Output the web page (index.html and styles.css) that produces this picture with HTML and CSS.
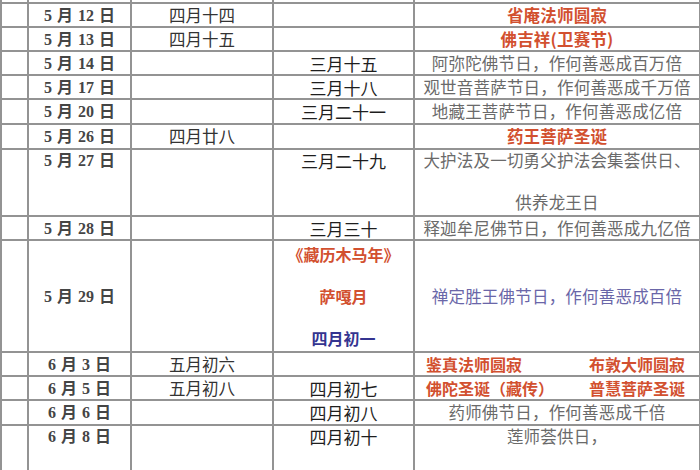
FILE: index.html
```html
<!DOCTYPE html>
<html lang="zh-CN">
<head>
<meta charset="utf-8">
<link rel="stylesheet" href="styles.css">
</head>
<body>
<div class="page">
<table class="cal">
  <colgroup>
    <col class="c0"><col class="c1"><col class="c2"><col class="c3"><col class="c4">
  </colgroup>
  <tr class="stub"><td></td><td></td><td></td><td></td><td></td></tr>
  <tr class="r24"><td></td><td class="date">5 月 12 日</td><td class="lunar">四月十四</td><td class="tib"></td><td class="note red">省庵法师圆寂</td></tr>
  <tr class="r24"><td></td><td class="date">5 月 13 日</td><td class="lunar">四月十五</td><td class="tib"></td><td class="note red">佛吉祥(卫赛节)</td></tr>
  <tr class="r24"><td></td><td class="date">5 月 14 日</td><td class="lunar"></td><td class="tib">三月十五</td><td class="note">阿弥陀佛节日，作何善恶成百万倍</td></tr>
  <tr class="r24"><td></td><td class="date">5 月 17 日</td><td class="lunar"></td><td class="tib">三月十八</td><td class="note">观世音菩萨节日，作何善恶成千万倍</td></tr>
  <tr class="r25"><td></td><td class="date">5 月 20 日</td><td class="lunar"></td><td class="tib">三月二十一</td><td class="note">地藏王菩萨节日，作何善恶成亿倍</td></tr>
  <tr class="r25"><td></td><td class="date">5 月 26 日</td><td class="lunar">四月廿八</td><td class="tib"></td><td class="note red">药王菩萨圣诞</td></tr>
  <tr class="r67 top"><td></td><td class="date">5 月 27 日</td><td class="lunar"></td><td class="tib">三月二十九</td><td class="note">大护法及一切勇父护法会集荟供日、<br><br>供养龙王日</td></tr>
  <tr class="r24"><td></td><td class="date">5 月 28 日</td><td class="lunar"></td><td class="tib">三月三十</td><td class="note">释迦牟尼佛节日，作何善恶成九亿倍</td></tr>
  <tr class="r112"><td></td><td class="date">5 月 29 日</td><td class="lunar"></td><td class="tib multi"><span class="red">《藏历木马年》</span><br><br><span class="red">萨嘎月</span><br><br><span class="blue">四月初一</span></td><td class="note lilac">禅定胜王佛节日，作何善恶成百倍</td></tr>
  <tr class="r24"><td></td><td class="date">6 月 3 日</td><td class="lunar">五月初六</td><td class="tib"></td><td class="note red"><div class="pair"><span>鉴真法师圆寂</span><span>布敦大师圆寂</span></div></td></tr>
  <tr class="r24"><td></td><td class="date">6 月 5 日</td><td class="lunar">五月初八</td><td class="tib">四月初七</td><td class="note red"><div class="pair"><span>佛陀圣诞（藏传）</span><span>普慧菩萨圣诞</span></div></td></tr>
  <tr class="r25"><td></td><td class="date">6 月 6 日</td><td class="lunar"></td><td class="tib">四月初八</td><td class="note">药师佛节日，作何善恶成千倍</td></tr>
  <tr class="rlast top"><td></td><td class="date">6 月 8 日</td><td class="lunar"></td><td class="tib">四月初十</td><td class="note">莲师荟供日，</td></tr>
</table>
</div>
</body>
</html>
```

FILE: styles.css
```css
html, body {
  margin: 0;
  padding: 0;
  background: #ffffff;
}

.page {
  width: 700px;
  height: 470px;
  overflow: hidden;
  background: #ffffff;
}

.cal {
  border-collapse: collapse;
  table-layout: fixed;
  width: 699px;
  font-family: "Noto Sans CJK SC", sans-serif;
  color: #333333;
}

.c0 { width: 27px; }
.c1 { width: 103px; }
.c2 { width: 142px; }
.c3 { width: 141px; }
.c4 { width: 286px; }

.cal td {
  border: 2px solid #939393;
  padding: 0;
  text-align: center;
  vertical-align: middle;
  white-space: nowrap;
  overflow: hidden;
  line-height: 21px;
}

.stub td { border-top: none; height: 2px; }
.r24 td { height: 22px; }
.r25 td { height: 23px; }
.r67 td { height: 65px; }
.r112 td { height: 110px; }
.rlast td { height: 70px; }

.top td { vertical-align: top; }

.date {
  font-family: "Liberation Serif", "Noto Sans CJK SC", serif;
  font-weight: bold;
  font-size: 16px;
  color: #454545;
  word-spacing: 1px;
}

.lunar {
  font-size: 16.5px;
  color: #333333;
}

.tib {
  font-size: 17px;
  font-weight: normal;
  color: #1e1e1e;
}

.tib.multi {
  font-weight: bold;
  font-size: 16px;
}

.note {
  font-size: 16.5px;
  color: #6a6a6a;
  letter-spacing: 0.2px;
}

.red {
  color: #d2502f;
  font-weight: bold;
}

.blue {
  color: #343490;
}

.lilac {
  color: #6a66a8;
}

.pair {
  display: flex;
  justify-content: space-between;
  padding: 0 14px 0 11px;
  font-size: 16px;
  letter-spacing: 0;
}
```
